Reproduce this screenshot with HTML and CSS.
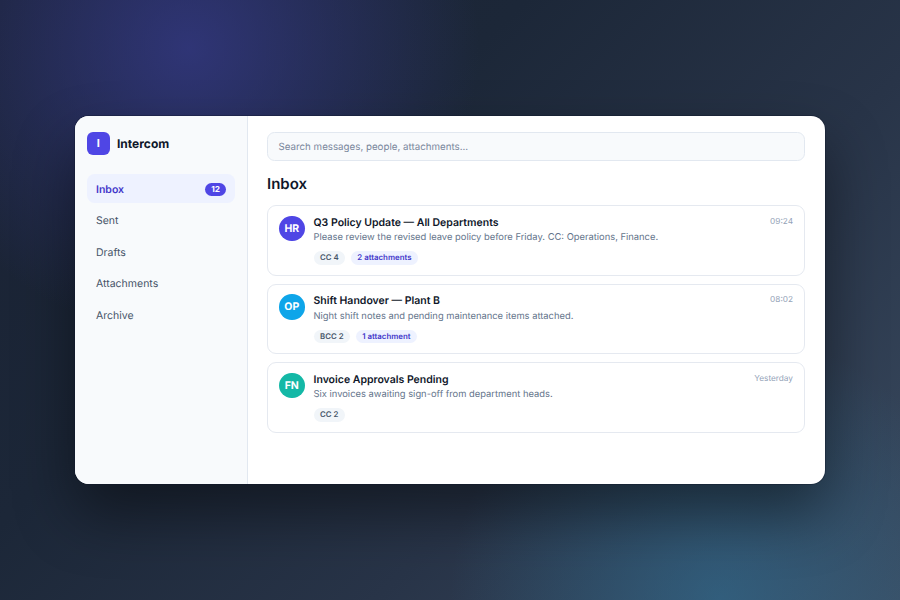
FILE: index.html
```html
<!DOCTYPE html>
<html lang="en">
<head>
    <meta charset="UTF-8">
    <meta name="viewport" content="width=device-width, initial-scale=1.0">
    <title>Intercom</title>
    <link rel="stylesheet" href="styles.css">
</head>
<body>

    <div class="window">
        <aside class="sidebar">
            <div class="brand">
                <div class="brand-logo">I</div>
                <div class="brand-name">Intercom</div>
            </div>
            <nav class="nav">
                <a class="nav-item active">Inbox <span class="nav-badge">12</span></a>
                <a class="nav-item">Sent</a>
                <a class="nav-item">Drafts</a>
                <a class="nav-item">Attachments</a>
                <a class="nav-item">Archive</a>
            </nav>
        </aside>

        <main class="main">
            <div class="search">Search messages, people, attachments...</div>
            <h1 class="title">Inbox</h1>

            <div class="messages">
                <div class="message">
                    <div class="avatar avatar-hr">HR</div>
                    <div class="message-body">
                        <div class="message-subject">Q3 Policy Update — All Departments</div>
                        <div class="message-preview">Please review the revised leave policy before Friday. CC: Operations, Finance.</div>
                        <div class="tags">
                            <span class="tag">CC 4</span>
                            <span class="tag tag-attach">2 attachments</span>
                        </div>
                    </div>
                    <div class="message-time">09:24</div>
                </div>

                <div class="message">
                    <div class="avatar avatar-op">OP</div>
                    <div class="message-body">
                        <div class="message-subject">Shift Handover — Plant B</div>
                        <div class="message-preview">Night shift notes and pending maintenance items attached.</div>
                        <div class="tags">
                            <span class="tag">BCC 2</span>
                            <span class="tag tag-attach">1 attachment</span>
                        </div>
                    </div>
                    <div class="message-time">08:02</div>
                </div>

                <div class="message">
                    <div class="avatar avatar-fn">FN</div>
                    <div class="message-body">
                        <div class="message-subject">Invoice Approvals Pending</div>
                        <div class="message-preview">Six invoices awaiting sign-off from department heads.</div>
                        <div class="tags">
                            <span class="tag">CC 2</span>
                        </div>
                    </div>
                    <div class="message-time">Yesterday</div>
                </div>
            </div>
        </main>
    </div>

</body>
</html>
```

FILE: styles.css
```css
* {
    box-sizing: border-box;
}

html, body {
    height: 100%;
}

body {
    margin: 0;
    font-family: Inter, "Liberation Sans", sans-serif;
    text-rendering: geometricPrecision;
    display: flex;
    align-items: center;
    justify-content: center;
    background:
        radial-gradient(circle at 21% 8%, rgba(56, 60, 145, 0.7) 0%, rgba(56, 60, 145, 0) 290px),
        radial-gradient(circle at 80% 100%, rgba(48, 120, 160, 0.5) 0%, rgba(48, 120, 160, 0) 270px),
        linear-gradient(135deg, #1a2234 0%, #1c2738 35%, #283448 65%, #3a4b60 100%);
}

.window {
    width: 750px;
    height: 368px;
    display: flex;
    background: #fff;
    border-radius: 14px;
    overflow: hidden;
    box-shadow: 0 0 0 1px rgba(15, 23, 42, 0.35), 0 30px 60px rgba(0, 0, 0, 0.45);
}

.sidebar {
    width: 173px;
    flex-shrink: 0;
    padding: 16px 12px;
    background: #f8fafc;
    border-right: 1px solid #e2e8f0;
}

.brand {
    display: flex;
    align-items: center;
    gap: 7.5px;
    margin-bottom: 19.5px;
}

.brand-logo {
    width: 22.5px;
    height: 22.5px;
    border-radius: 6px;
    background: #4f46e5;
    color: #fff;
    font-size: 11px;
    font-weight: 700;
    display: flex;
    align-items: center;
    justify-content: center;
}

.brand-name {
    font-size: 12px;
    font-weight: 700;
    color: #0f172a;
}

.nav {
    display: flex;
    flex-direction: column;
    gap: 2.25px;
}

.nav-item {
    display: flex;
    align-items: center;
    justify-content: space-between;
    height: 29.25px;
    padding: 1px 9px 0;
    border-radius: 7.5px;
    font-size: 10.5px;
    font-weight: 400;
    color: #475569;
}

.nav-item.active {
    background: #eef2ff;
    color: #4338ca;
    font-weight: 600;
}

.nav-badge {
    background: #4f46e5;
    color: #fff;
    font-size: 8.25px;
    line-height: 10px;
    font-weight: 700;
    padding: 1.5px 6px;
    border-radius: 999px;
}

.main {
    flex: 1;
    padding: 16px 20px 16px 19px;
}

.search {
    height: 29px;
    padding: 1px 10.5px 0;
    display: flex;
    align-items: center;
    background: #f8fafc;
    border: 1px solid #e2e8f0;
    border-radius: 7.5px;
    font-size: 9.75px;
    color: #7b889c;
}

.title {
    margin: 13px 0 12px;
    font-size: 15px;
    line-height: 19px;
    font-weight: 600;
    color: #0f172a;
}

.messages {
    display: flex;
    flex-direction: column;
    gap: 8px;
}

.message {
    display: flex;
    gap: 9px;
    height: 70.5px;
    padding: 9.5px 11px;
    border: 1px solid #e5e9f0;
    border-radius: 9px;
    background: #fff;
}

.avatar {
    width: 25.5px;
    height: 25.5px;
    flex-shrink: 0;
    border-radius: 50%;
    color: #fff;
    font-size: 10.5px;
    font-weight: 700;
    display: flex;
    align-items: center;
    justify-content: center;
}

.avatar-hr {
    background: #4f46e5;
}

.avatar-op {
    background: #0ea5e9;
}

.avatar-fn {
    background: #14b8a6;
}

.message-body {
    flex: 1;
    min-width: 0;
}

.message-subject {
    font-size: 10.5px;
    line-height: 14px;
    font-weight: 600;
    color: #0f172a;
}

.message-preview {
    margin-top: 1.5px;
    font-size: 9.375px;
    line-height: 13px;
    color: #64748b;
}

.tags {
    display: flex;
    gap: 5.5px;
    margin-top: 7px;
}

.tag {
    padding: 2px 6.5px;
    font-size: 7.875px;
    line-height: 9.5px;
    font-weight: 600;
    border-radius: 999px;
    background: #f1f5f9;
    color: #475569;
}

.tag-attach {
    background: #eef2ff;
    color: #4338ca;
}

.message-time {
    font-size: 8.25px;
    line-height: 11px;
    color: #94a3b8;
}
```
